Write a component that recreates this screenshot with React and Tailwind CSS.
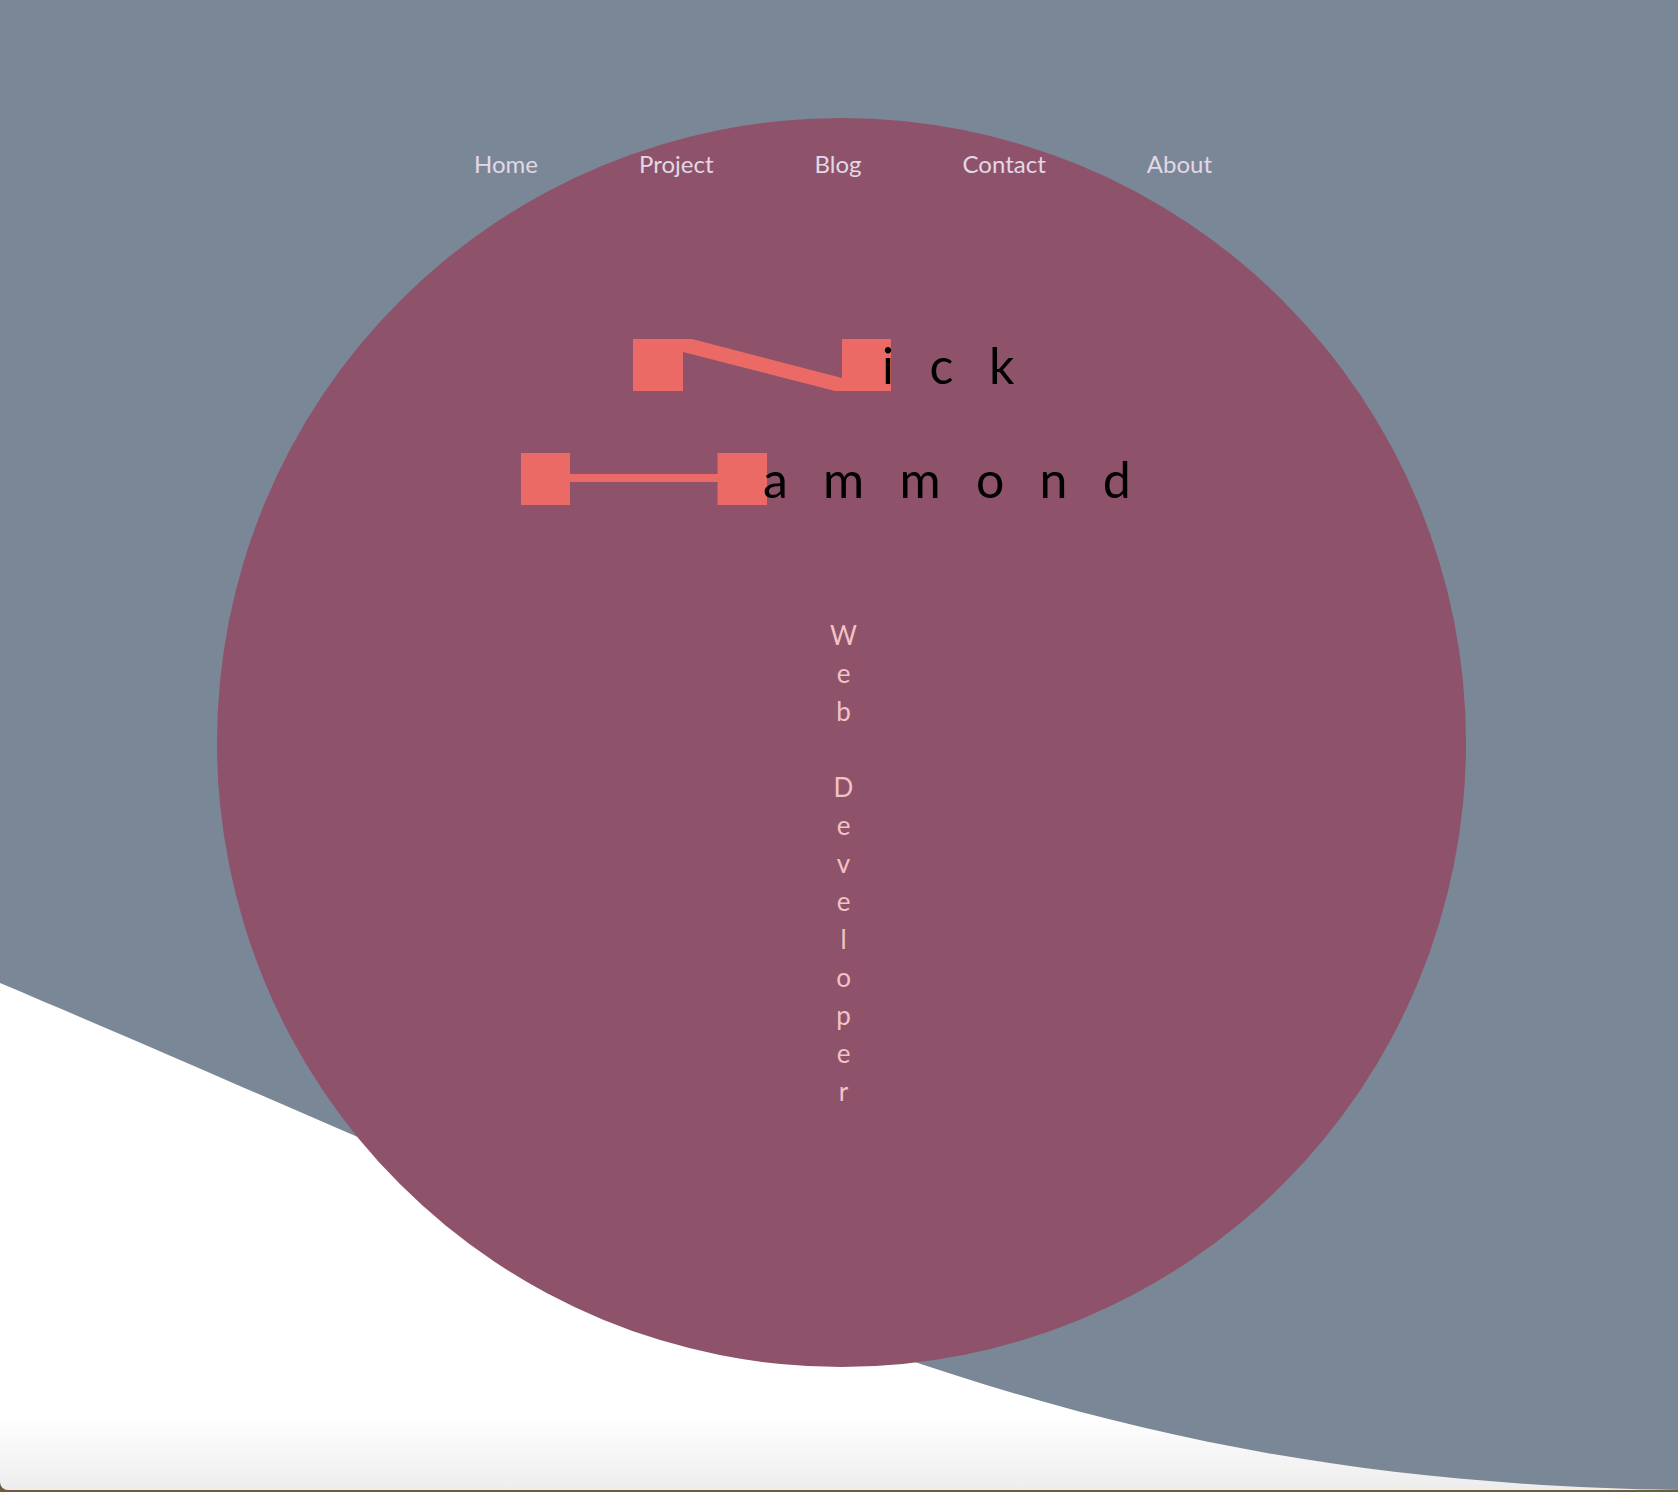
import React from 'react';

const navItems = ['Home', 'Project', 'Blog', 'Contact', 'About'];
const subtitle = 'Web Developer'.split('');

const LetterN = () => (
  <svg width="258" height="52" viewBox="0 0 258 52" className="shrink-0" role="img" aria-label="N">
    <rect x="0" y="0" width="50" height="52" fill="#ec6a65" />
    <rect x="209" y="0" width="49" height="52" fill="#ec6a65" />
    <polygon points="50,0 59,0 209,39 209,52 202,52 50,13" fill="#ec6a65" />
  </svg>
);

const LetterH = () => (
  <svg width="246" height="52" viewBox="0 0 246 52" className="shrink-0" role="img" aria-label="H">
    <rect x="0" y="0" width="49" height="52" fill="#ec6a65" />
    <rect x="196.5" y="0" width="49.5" height="52" fill="#ec6a65" />
    <rect x="48" y="21" width="150" height="8" fill="#ec6a65" />
  </svg>
);

export default function App() {
  return (
    <div className="w-full h-[1492px] bg-[#6f5a3c] overflow-hidden" style={{ fontFamily: 'Lato, "Open Sans", sans-serif' }}>
      <div className="relative w-full h-[1490px] rounded-bl-[8px] overflow-hidden bg-[linear-gradient(to_bottom,#ffffff_0%,#ffffff_95%,#ededed_100%)]">
        {/* background wave */}
        <svg className="absolute inset-0" width="1678" height="1490" viewBox="0 0 1678 1490">
          <path d="M0 0 H1678 V1490 C1050 1480 750 1300 0 983 Z" fill="#7a8797" />
        </svg>

        <div className="relative pt-[118px] pl-[217px]">
          <div className="w-[1249px] h-[1249px] rounded-full bg-[#8e536a] flex flex-col items-center pt-[29px]">
            <nav className="flex justify-center gap-[101px] text-[24px] leading-[33px] text-[#e2d8e6] ml-[3px]">
              {navItems.map((item) => (
                <a key={item} href="#" className="whitespace-nowrap">
                  {item}
                </a>
              ))}
            </nav>

            <h1 className="mt-[159px] flex items-start h-[52px] text-black">
              <LetterN />
              <span className="-ml-[9px] text-[50px] leading-[52px] tracking-[35.5px]">ick</span>
            </h1>

            <h1 className="mt-[62px] flex items-start h-[52px] text-black ml-[4px]">
              <LetterH />
              <span className="-ml-[4px] text-[50px] leading-[52px] tracking-[35.3px]">ammond</span>
            </h1>

            <div className="mt-[111px] ml-[4px] flex flex-col items-center text-[26px] leading-[38px] text-[#f1c3c5]">
              {subtitle.map((ch, i) =>
                ch === ' ' ? (
                  <span key={i} className="h-[38px]" />
                ) : (
                  <span key={i}>{ch}</span>
                )
              )}
            </div>
          </div>
        </div>
      </div>
    </div>
  );
}
